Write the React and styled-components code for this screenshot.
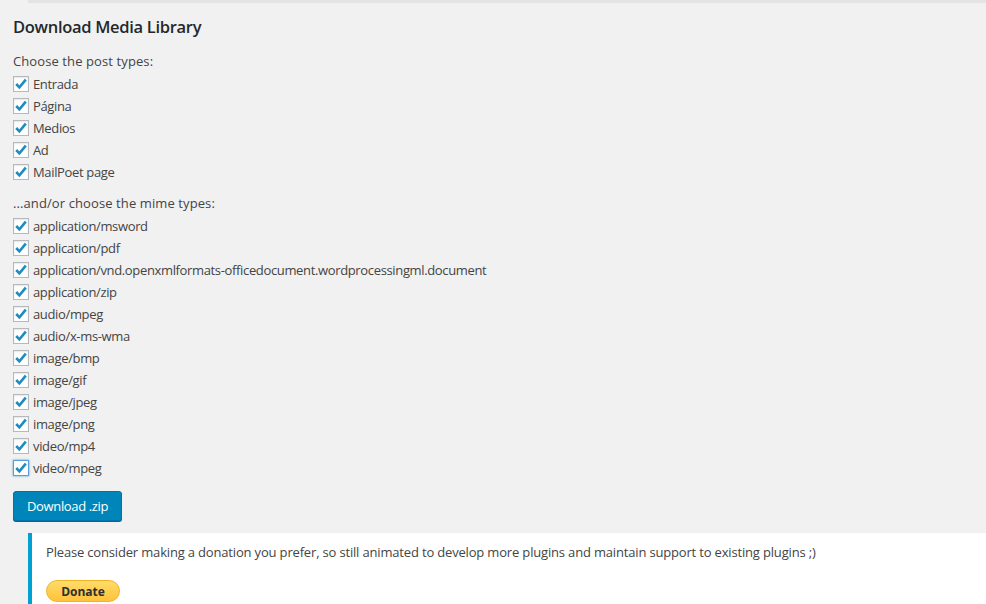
import React, { useState } from "react";
import styled, { createGlobalStyle } from "styled-components";

const GlobalStyle = createGlobalStyle`
  html, body {
    margin: 0;
    padding: 0;
    background: #f1f1f1;
  }
  body {
    font-family: "Open Sans", "Noto Sans", sans-serif;
    font-size: 13px;
    color: #444;
    overflow: hidden;
  }
`;

const Page = styled.div`
  width: 986px;
  height: 604px;
  overflow: hidden;
`;

const TopEdge = styled.div`
  margin-left: 28px;
  height: 2px;
  background: #e4e4e4;
  box-shadow: 0 1px 1px rgba(0, 0, 0, 0.06);
`;

const Wrap = styled.div`
  padding: 0 0 0 13px;
`;

const Title = styled.h2`
  margin: 13px 0 0;
  font-size: 16.5px;
  font-weight: 600;
  color: #23282d;
  line-height: 24px;
  letter-spacing: -0.3px;
`;

const Label = styled.p`
  margin: ${(p) => p.$top}px 0 0;
  line-height: 20px;
  letter-spacing: 0.1px;
`;

const List = styled.ul`
  list-style: none;
  margin: 2px 0 0;
  padding: 0;
`;

const Row = styled.li`
  display: flex;
  align-items: center;
  height: 22px;
  letter-spacing: -0.35px;
`;

const Box = styled.span`
  box-sizing: border-box;
  width: 16px;
  height: 16px;
  margin-right: 4px;
  background: #fff;
  border: 1px solid ${(p) => (p.$focus ? "#5b9dd9" : "#b4b9be")};
  box-shadow: ${(p) =>
    p.$focus
      ? "0 0 2px rgba(30, 140, 190, 0.8)"
      : "inset 0 1px 2px rgba(0, 0, 0, 0.1)"};
  display: flex;
  align-items: center;
  justify-content: center;
  flex-shrink: 0;
`;

const Button = styled.button`
  margin-top: 12px;
  height: 30px;
  padding: 0 13px;
  background: #0085ba;
  border: 1px solid #0073aa;
  border-radius: 3px;
  box-shadow: 0 1px 0 #006799;
  color: #fff;
  font-family: inherit;
  font-size: 13px;
  letter-spacing: -0.35px;
  cursor: pointer;
`;

const Notice = styled.div`
  margin: 12px 0 0 28px;
  background: #fff;
  border-left: 4px solid #00a0d2;
  padding: 9px 14px 0;
  height: 80px;
  box-sizing: border-box;
`;

const NoticeText = styled.p`
  margin: 0;
  line-height: 20px;
  letter-spacing: -0.17px;
`;

const Donate = styled.button`
  margin-top: 18px;
  width: 74px;
  height: 22px;
  border-radius: 11px;
  border: 1px solid #f0b429;
  background: linear-gradient(#ffdc6a, #ffc23a);
  font-family: "Open Sans", "Noto Sans", sans-serif;
  font-weight: 700;
  font-size: 12px;
  color: #2c2e2f;
  padding: 0;
`;

const Check = () => (
  <svg width="14" height="14" viewBox="0 0 14 14">
    <polyline
      points="2.2,7 5.4,10.3 11.8,2.6"
      fill="none"
      stroke="#1e8cbe"
      strokeWidth="2.6"
      strokeLinecap="butt"
      strokeLinejoin="miter"
    />
  </svg>
);

const postTypes = ["Entrada", "Página", "Medios", "Ad", "MailPoet page"];
const mimeTypes = [
  "application/msword",
  "application/pdf",
  "application/vnd.openxmlformats-officedocument.wordprocessingml.document",
  "application/zip",
  "audio/mpeg",
  "audio/x-ms-wma",
  "image/bmp",
  "image/gif",
  "image/jpeg",
  "image/png",
  "video/mp4",
  "video/mpeg",
];

function CheckList({ items, focusLast }) {
  return (
    <List>
      {items.map((name, i) => (
        <Row key={name}>
          <Box $focus={focusLast && i === items.length - 1}>
            <Check />
          </Box>
          {name}
        </Row>
      ))}
    </List>
  );
}

export default function App() {
  const [sent, setSent] = useState(false);
  return (
    <Page>
      <GlobalStyle />
      <TopEdge />
      <Wrap>
        <Title>Download Media Library</Title>
        <Label $top={12}>Choose the post types:</Label>
        <CheckList items={postTypes} />
        <Label $top={10}>...and/or choose the mime types:</Label>
        <CheckList items={mimeTypes} focusLast />
        <Button onClick={() => setSent(!sent)}>Download .zip</Button>
      </Wrap>
      <Notice>
        <NoticeText>
          Please consider making a donation you prefer, so still animated to
          develop more plugins and maintain support to existing plugins ;)
        </NoticeText>
        <Donate>Donate</Donate>
      </Notice>
    </Page>
  );
}
